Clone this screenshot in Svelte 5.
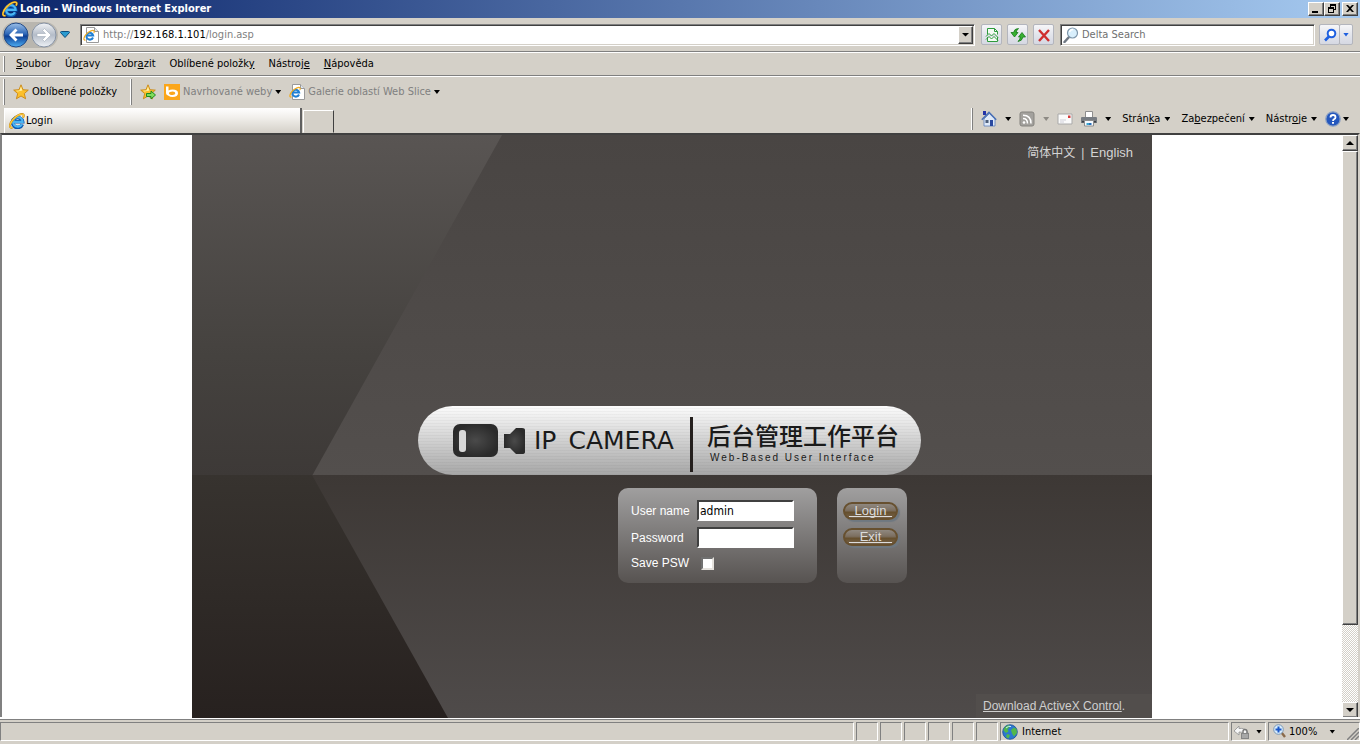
<script>
    // menu entries are split around the access key letter
    let menu = [
        ['', 'S', 'oubor'],
        ['Úp', 'r', 'avy'],
        ['Zobr', 'a', 'zit'],
        ['Oblíbené položk', 'y', ''],
        ['Nástroj', 'e', ''],
        ['', 'N', 'ápověda']
    ]

    let commands = [
        ['Strán', 'k', 'a'],
        ['Za', 'b', 'ezpečení'],
        ['Nástr', 'o', 'je']
    ]

    let address = 'http://192.168.1.101/login.asp'
    let user = 'admin'
    let password = ''
    let savePassword = false

    $: parts = address.match(/^(https?:\/\/)([^/]+)(.*)$/) || ['', '', '', address]
</script>

<svelte:head><title>Login</title></svelte:head>

{#snippet ie()}
    <svg class="icon" viewBox="0 0 16 16">
        <path d="M13.300 11.300A5 5 0 1 1 13.600 8.800H5" fill="none" stroke="#0c58b0" stroke-width="3.600" />
        <path d="M13 11.200A4.800 4.800 0 1 1 13.600 8.800H5" fill="none" stroke="#49b4f2" stroke-width="2.200" />
        <path d="M3.500 14.600C-.8 15.500.8 10 4.500 6 8.500 1.800 13 .2 14.300 1.500c.8.8.4 2-.3 3.200" fill="none" stroke="#b87a0c" stroke-width="2" />
        <path d="M3.500 14.600C-.8 15.500.8 10 4.500 6 8.500 1.800 13 .2 14.300 1.500c.8.8.4 2-.3 3.200" fill="none" stroke="#fbc83a" stroke-width="1.300" />
    </svg>
{/snippet}

{#snippet page()}
    <svg class="icon" viewBox="0 0 16 16">
        <path d="M3.500.5h8l4 4v11h-12z" fill="#fff" stroke="#9a9a9a" />
        <path d="M11.500.5v4h4" fill="#dfe6ee" stroke="#9a9a9a" />
        <path d="M10 10.500A3.400 3.400 0 1 1 10.200 8.600H4" fill="none" stroke="#1f7fd4" stroke-width="2" />
        <path d="M2.500 13C-.5 13.500 1 9.500 3.800 6.700 6.500 4 10 2.800 11 3.900c.5.500.2 1.300-.2 2" fill="none" stroke="#eeaa22" stroke-width="1.200" />
    </svg>
{/snippet}

{#snippet star(arrow)}
    <svg class="icon" viewBox="0 0 16 16">
        <path d="M8 .8l2 4.900 5.300.4-4 3.500 1.300 5.200L8 12l-4.600 2.800 1.300-5.200-4-3.500L6 5.700z" fill="#fcc02a" stroke="#c98714" stroke-width=".9" />
        <path d="M8 2.500L9.300 6.500 4.500 7.500 2.800 6.800 6.500 6.400z" fill="#fff1a8" />
        {#if arrow}
            <path d="M6.500 9.500h4.500V7l4.500 4-4.500 4v-2.500H6.500z" fill="#7fdc5a" stroke="#1f8a1f" />
        {/if}
    </svg>
{/snippet}

{#snippet label(t)}<span>{t[0]}<u>{t[1]}</u>{t[2]}</span>{/snippet}

<div class="window">
    <header class="titlebar">
        {@render ie()}
        <h1>Login - Windows Internet Explorer</h1>
        <div class="controls">
            <button class="raised" aria-label="Minimize"><svg viewBox="0 0 12 10"><path d="M2 7h6v2H2z" /></svg></button>
            <button class="raised" aria-label="Restore"><svg viewBox="0 0 12 10"><path d="M4 0h6v6H8V5h1V2H5v1H4zM2 3h6v6H2zM3 5v3h4V5z" fill-rule="evenodd" /></svg></button>
            <button class="raised close" aria-label="Close"><svg viewBox="0 0 12 10"><path d="M2 1h2l2 2 2-2h2L7 4.500 10 8H8L6 6 4 8H2l3-3.500z" /></svg></button>
        </div>
    </header>

    <div class="row navigation">
        <div class="travel">
            <button class="plain" aria-label="Back">
                <svg width="26" height="26" viewBox="0 0 26 26">
                    <defs>
                        <linearGradient id="back" x1="0" y1="0" x2="0" y2="1">
                            <stop offset="0" stop-color="#9cc0e8" />
                            <stop offset=".45" stop-color="#2f68b8" />
                            <stop offset=".55" stop-color="#0d3f96" />
                            <stop offset="1" stop-color="#4fb0f4" />
                        </linearGradient>
                    </defs>
                    <circle cx="13" cy="13" r="12" fill="url(#back)" stroke="#234a86" />
                    <path d="M12.500 6.500L6 13l6.500 6.500 2-2-3-3H20v-3h-8.500l3-3z" fill="#fff" />
                </svg>
            </button>
            <button class="plain" aria-label="Forward">
                <svg width="26" height="26" viewBox="0 0 26 26">
                    <defs>
                        <linearGradient id="forward" x1="0" y1="0" x2="0" y2="1">
                            <stop offset="0" stop-color="#f2f4f7" />
                            <stop offset=".5" stop-color="#b4bcc8" />
                            <stop offset="1" stop-color="#eef2f6" />
                        </linearGradient>
                    </defs>
                    <circle cx="13" cy="13" r="12" fill="url(#forward)" stroke="#8793a5" />
                    <path d="M13.500 6.500L20 13l-6.500 6.500-2-2 3-3H6v-3h8.500l-3-3z" fill="#fff" stroke="#a3acb9" stroke-width=".6" />
                </svg>
            </button>
        </div>
        <button class="plain recent" aria-label="Recent pages">
            <svg width="10" height="7" viewBox="0 0 10 7"><path d="M.5 1.500q0-1 1-1h7q1 0 1 1L5 6.500z" fill="#2a9bd0" stroke="#0d4f80" /></svg>
        </button>
        <div class="field address">
            {@render page()}
            <div class="url"><span>{parts[1]}</span>{parts[2]}<span>{parts[3]}</span></div>
            <button class="raised combo" aria-label="Show address history"><i class="arrow wide"></i></button>
        </div>
        <div class="tools">
            <button class="tool" aria-label="Compatibility view">
                <svg class="icon" viewBox="0 0 16 16">
                    <path d="M3.500 7.500v-6h7l3 3v3M3.500 10v4.500h10V10" fill="#f4fbf4" stroke="#2e9b3c" />
                    <path d="M10.500 1.500v3h3" fill="none" stroke="#2e9b3c" />
                    <path d="M2 9.500l3-3 2.500 2.500L10 6.500l4 4M2 12.500l3-3L7.500 12 10 9.500l4 4" fill="none" stroke="#2e9b3c" />
                </svg>
            </button>
            <button class="tool" aria-label="Refresh">
                <svg class="icon" viewBox="0 0 16 16">
                    <path d="M8.500 1.500Q4.500 1.500 3.500 5.500H1L4.500 10 8 5.500H6Q6.500 3.500 8.500 1.500z" fill="#38b032" stroke="#167a1c" stroke-width=".8" />
                    <path d="M8 14.500q4-.3 5-4.500h2.500L12 5.500 8.500 10h2Q10 12.500 8 14.500z" fill="#38b032" stroke="#167a1c" stroke-width=".8" />
                </svg>
            </button>
            <button class="tool" aria-label="Stop">
                <svg class="icon" viewBox="0 0 16 16"><path d="M3 3l10 11M13 3L3 14" stroke="#cf2f2f" stroke-width="2.400" /></svg>
            </button>
        </div>
        <div class="field search">
            <svg class="icon" viewBox="0 0 16 16">
                <path d="M6.500 9.500L1.500 15" stroke="#6f7883" stroke-width="2.500" stroke-linecap="round" />
                <circle cx="9.500" cy="6" r="5" fill="#d9effc" stroke="#7f97ab" stroke-width="1.200" />
                <path d="M6.500 5q1-2.500 3.500-2.500" stroke="#fff" stroke-width="1.500" fill="none" />
            </svg>
            <input type="text" placeholder="Delta Search" aria-label="Search" />
        </div>
        <div class="go">
            <button class="tool" aria-label="Search">
                <svg class="icon" viewBox="0 0 16 16">
                    <path d="M7 9.500L3 13.500" stroke="#1d5fe0" stroke-width="2.600" />
                    <circle cx="9.500" cy="6.500" r="3.800" fill="#fff" stroke="#1d5fe0" stroke-width="2" />
                </svg>
            </button>
            <button class="tool narrow" aria-label="Search options"><i class="arrow blue"></i></button>
        </div>
    </div>

    <nav class="row menu">
        <i class="grip"></i>
        {#each menu as item}
            <button class="plain">{@render label(item)}</button>
        {/each}
    </nav>

    <div class="row favorites">
        <i class="grip"></i>
        <button class="plain mine">{@render star(false)}Oblíbené položky</button>
        <i class="grip"></i>
        <button class="plain add" aria-label="Add to favorites">{@render star(true)}</button>
        <button class="plain faded">
            <svg class="icon" viewBox="0 0 16 16">
                <path d="M0 0h16v16H0z" fill="#fba61a" />
                <path d="M2 2.500h2.500v4Q6 5.500 8.500 5.500q5.500 0 5.500 3.700T8.500 13q-2.500 0-4-1.200-2.500-1-2.500-2.600zM8.500 7.500Q5 7.500 5 9.200T8.500 11q2.800 0 2.800-1.800T8.500 7.500z" fill="#fff" fill-rule="evenodd" />
            </svg>
            <span>Navrhované weby</span><i class="arrow"></i>
        </button>
        <button class="plain faded">{@render page()}<span>Galerie oblastí Web Slice</span><i class="arrow"></i></button>
    </div>

    <div class="tabs">
        <button class="tab">{@render ie()}Login</button>
        <button class="new-tab" aria-label="New tab"></button>
        <div class="commands">
            <i class="grip"></i>
            <button class="plain" aria-label="Home">
                <svg class="icon" viewBox="0 0 16 16">
                    <path d="M2 0h3v4H2z" fill="#2232a8" />
                    <path d="M3 8l5.500-5.500L14 8v7H3z" fill="#dfe9f8" stroke="#5a7dbb" stroke-width=".8" />
                    <path d="M.8 8.700L8 1.500l7.200 7.200" fill="none" stroke="#4a70b5" stroke-width="1.600" />
                    <path d="M4.500 9h3v3h-3z" fill="#4d5f7b" />
                    <path d="M9 9h3v6H9z" fill="#2a49a0" />
                </svg>
                <i class="arrow"></i>
            </button>
            <button class="plain" aria-label="Feeds">
                <svg class="icon" viewBox="0 0 16 16">
                    <rect x="1" y="1" width="14" height="14" rx="2" fill="#a3a19d" stroke="#85837f" />
                    <circle cx="5" cy="11.500" r="1.300" fill="#fff" />
                    <path d="M4 7.500q4.500 0 4.500 5M4 4.200q8 0 8 8.300" fill="none" stroke="#fff" stroke-width="1.500" />
                </svg>
                <i class="arrow dim"></i>
            </button>
            <button class="plain" aria-label="Read mail">
                <svg class="icon" viewBox="0 0 16 16">
                    <path d="M1 3h14v10H1z" fill="#fbfbfb" stroke="#a9a9a9" />
                    <path d="M11 4.500h2.500V7H11z" fill="#d43a3a" />
                    <path d="M3 9h6M3 11h4" stroke="#cfcfd8" />
                </svg>
            </button>
            <button class="plain" aria-label="Print">
                <svg class="icon" viewBox="0 0 16 16">
                    <path d="M4.500.5h7v6h-7z" fill="#fff" stroke="#8d8d8d" />
                    <path d="M1 6h14q1 0 1 1v5H0V7q0-1 1-1z" fill="#777c82" />
                    <path d="M1 10h14v1.500H1z" fill="#3c4046" />
                    <path d="M3.500 9.500h9v5.500h-9z" fill="#f5faff" stroke="#8d8d8d" />
                    <path d="M5.500 12h2.500v2H5.500z" fill="#3aa6d0" />
                    <path d="M8 12h2.500v2H8z" fill="#2a6fb8" />
                </svg>
                <i class="arrow"></i>
            </button>
            {#each commands as item}
                <button class="plain text">{@render label(item)}<i class="arrow"></i></button>
            {/each}
            <button class="plain help" aria-label="Help">
                <svg class="icon" viewBox="0 0 16 16">
                    <circle cx="8" cy="8" r="7.200" fill="#2457bd" stroke="#8aa0c4" stroke-width="1.300" />
                    <path d="M5.500 6.500Q5.500 4 8 4t2.500 2.200Q10.500 7.500 9 8.300 8 8.900 8 10" fill="none" stroke="#fff" stroke-width="1.800" />
                    <path d="M7 11h2v1.800H7z" fill="#fff" />
                </svg>
                <i class="arrow"></i>
            </button>
        </div>
    </div>

    <div class="viewport">
        <main>
            <svg class="backdrop" viewBox="0 0 960 583" preserveAspectRatio="none">
                <defs>
                    <linearGradient id="topleft" x1="0" y1="0" x2="0" y2="1">
                        <stop offset="0" stop-color="#595553" />
                        <stop offset=".65" stop-color="#45423f" />
                        <stop offset="1" stop-color="#3d3937" />
                    </linearGradient>
                    <linearGradient id="topright" x1="0" y1="0" x2="0" y2="1">
                        <stop offset="0" stop-color="#494543" />
                        <stop offset="1" stop-color="#534f4d" />
                    </linearGradient>
                    <linearGradient id="bottomleft" x1="0" y1="0" x2="0" y2="1">
                        <stop offset="0" stop-color="#37332f" />
                        <stop offset="1" stop-color="#27211f" />
                    </linearGradient>
                    <linearGradient id="bottomright" x1="0" y1="0" x2="0" y2="1">
                        <stop offset="0" stop-color="#3d3835" />
                        <stop offset="1" stop-color="#4f4b4a" />
                    </linearGradient>
                </defs>
                <path d="M0 0h960v341H0z" fill="url(#topleft)" />
                <path d="M310 0h650v341H120z" fill="url(#topright)" />
                <path d="M0 340h960v243H0z" fill="url(#bottomleft)" />
                <path d="M120 340h840v243H256z" fill="url(#bottomright)" />
            </svg>

            <div class="languages">
                <a href="#zh">简体中文</a><span>|</span><a href="#en">English</a>
            </div>

            <div class="center">
                <div class="banner">
                    <svg width="74" height="36" viewBox="0 0 74 36">
                        <defs>
                            <radialGradient id="body">
                                <stop offset="0" stop-color="#4a4a4a" />
                                <stop offset="1" stop-color="#2b2b2b" />
                            </radialGradient>
                        </defs>
                        <rect x="1" y="1" width="45" height="33" rx="7" fill="url(#body)" />
                        <rect x="7" y="7" width="7" height="22" rx="3" fill="#d8d8d8" />
                        <path d="M52 11h6l6-6h6q3 0 3 2v22q0 2-3 2h-6l-6-6h-6z" fill="url(#body)" />
                    </svg>
                    <div class="brand"><span>IP</span><span>CAMERA</span></div>
                    <div class="platform">
                        <strong>后台管理工作平台</strong>
                        <small>Web-Based User Interface</small>
                    </div>
                </div>

                <form on:submit|preventDefault>
                    <div class="panel fields">
                        <label for="user">User name</label>
                        <input id="user" type="text" bind:value={user} />
                        <label for="password">Password</label>
                        <input id="password" type="password" bind:value={password} />
                        <label for="save">Save PSW</label>
                        <input id="save" type="checkbox" bind:checked={savePassword} />
                    </div>
                    <div class="panel actions">
                        <button type="submit"><span>Login</span></button>
                        <button type="button"><span>Exit</span></button>
                    </div>
                </form>
            </div>

            <div class="download"><a href="#activex">Download ActiveX Control</a>.</div>
        </main>

        <div class="scrollbar">
            <button class="raised" aria-label="Scroll up"><i class="arrow wide up"></i></button>
            <div class="track"><div class="raised thumb"></div></div>
            <button class="raised" aria-label="Scroll down"><i class="arrow wide"></i></button>
        </div>
    </div>

    <footer>
        <div class="pane message"></div>
        {#each Array(6) as _}
            <div class="pane small"></div>
        {/each}
        <div class="pane zone">
            <svg class="icon" viewBox="0 0 16 16">
                <circle cx="8" cy="8" r="7.300" fill="#2c78cf" stroke="#1b4e95" stroke-width=".8" />
                <path d="M3 3q3-2.500 5-1.500L7 4 5.500 5l1 2.500L4 9 1.500 6.500zM9 6l3-2.500 2.500 1.500.5 4-3 3.500-2-3zM5 10l3 1-1.500 3.500L4 13z" fill="#52b84a" />
                <path d="M4 4q2.500-2.500 5-1.500" stroke="#c8ecff" fill="none" />
            </svg>
            Internet
        </div>
        <div class="pane protect">
            <svg class="icon" viewBox="0 0 16 16">
                <path d="M0 7l5-5v2.500q6-1 9 4L10 10Q8 7.500 5 8v3z" fill="#f6f6f6" stroke="#989898" stroke-width=".9" />
                <path d="M9 9V7.500q0-2 2-2t2 2V9" fill="none" stroke="#777" stroke-width="1.400" />
                <path d="M7 9h8v6H7z" fill="#858585" />
                <path d="M8 11h6M8 13h6" stroke="#c9c9c9" />
            </svg>
            <i class="arrow"></i>
        </div>
        <div class="pane zoom">
            <svg class="icon" viewBox="0 0 16 16">
                <path d="M8.500 8.500L12 13" stroke="#8a6a4a" stroke-width="2.400" />
                <circle cx="5.500" cy="5.500" r="4.800" fill="#d6ecfc" stroke="#7d98b5" />
                <path d="M4.500 2.500h2v2h2v2h-2v2h-2v-2h-2v-2h2z" fill="#1c58c8" />
            </svg>
            <span>100%</span>
            <i class="arrow"></i>
            <svg class="resize" viewBox="0 0 12 12"><path d="M0 12L12 0M4 12l8-8M8 12l4-4" stroke="#808080" stroke-width="1.500" /></svg>
        </div>
    </footer>
</div>

<style>
    :global(body) {
        margin: 0;
        background: #d4d0c8;
    }
    .window {
        display: flex;
        flex-direction: column;
        min-height: 100vh;
        background: #d4d0c8;
        color: #000;
        font-family: 'DejaVu Sans Condensed', 'DejaVu Sans', Tahoma, sans-serif;
        font-size: 11px;
        line-height: 14px;
    }
    button, input {
        font: inherit;
        color: inherit;
        margin: 0;
        padding: 0;
        border-radius: 0;
        box-sizing: border-box;
    }
    .icon {
        width: 16px;
        height: 16px;
        flex: none;
        display: block;
    }
    .plain {
        display: flex;
        align-items: center;
        border: none;
        background: none;
        white-space: nowrap;
    }
    .raised {
        display: flex;
        align-items: center;
        justify-content: center;
        background: #d4d0c8;
        border: 1px solid;
        border-color: #fff #404040 #404040 #fff;
        box-shadow: inset -1px -1px #808080;
        box-sizing: border-box;
    }
    .arrow {
        flex: none;
        width: 6px;
        height: 4px;
        background: #000;
        clip-path: polygon(0 0, 100% 0, 50% 100%);
    }
    .arrow.wide {
        width: 8px;
        height: 4px;
    }
    .arrow.up {
        transform: rotate(180deg);
    }
    .arrow.blue {
        background: #1d5fe0;
    }
    .arrow.dim {
        background: #8d8a84;
    }
    .grip {
        flex: none;
        align-self: stretch;
        width: 1px;
        margin: 3px 0;
        border-left: 1px solid #fff;
        background: #808080;
    }

    /* title bar */
    .titlebar {
        display: flex;
        align-items: center;
        height: 18px;
        padding: 0 2px;
        background: linear-gradient(to right, #0a246a, #a6caf0);
    }
    h1 {
        flex: 1;
        margin: 0 0 0 2px;
        font-size: 11px;
        line-height: 14px;
        color: #fff;
    }
    .controls {
        display: flex;
    }
    .controls button {
        width: 16px;
        height: 14px;
    }
    .controls svg {
        width: 12px;
        height: 10px;
    }
    .controls .close {
        margin-left: 2px;
    }

    /* tool bars */
    .row {
        display: flex;
        align-items: center;
        border-bottom: 1px solid #808080;
        box-shadow: 0 1px #fff;
    }
    .navigation {
        height: 33px;
        padding: 0 7px 0 2px;
    }
    .travel {
        display: flex;
        gap: 2px;
        padding: 0 1px;
        border-radius: 14px;
        background: #b9b6af;
    }
    .recent {
        margin: 0 10px 0 2px;
    }
    .field {
        display: flex;
        align-items: center;
        height: 22px;
        box-sizing: border-box;
        background: #fff;
        border: 1px solid;
        border-color: #808080 #fff #fff #808080;
        box-shadow: inset 1px 1px #404040, inset -1px -1px #d4d0c8;
    }
    .address {
        flex: 1;
        gap: 4px;
        padding: 0 1px 0 2px;
    }
    .url {
        flex: 1;
        padding-top: 1px;
    }
    .url span {
        color: #808080;
    }
    .combo {
        width: 15px;
        height: 18px;
    }
    .tools {
        display: flex;
        gap: 5px;
        margin: 0 6px;
    }
    .tool {
        display: flex;
        align-items: center;
        justify-content: center;
        width: 21px;
        height: 21px;
        border: 1px solid #b3b5bd;
        border-radius: 2px;
        background: linear-gradient(#f6f6f8, #e3e5ec 50%, #d5d8e2);
    }
    .tool.narrow {
        width: 14px;
        margin-left: -1px;
    }
    .search {
        width: 255px;
        gap: 3px;
        padding: 1px 3px 0 2px;
    }
    .search input {
        flex: 1;
        min-width: 0;
        border: none;
        outline: none;
        background: none;
    }
    .search input::placeholder {
        color: #707070;
        opacity: 1;
    }
    .go {
        display: flex;
        margin-left: 4px;
    }
    .menu {
        height: 22px;
        margin-top: 1px;
        padding-left: 3px;
    }
    .menu .plain {
        padding: 0 7px;
    }
    .menu .grip {
        margin-right: 4px;
    }
    .favorites {
        height: 32px;
        padding-left: 3px;
        border: none;
        box-shadow: none;
    }
    .mine {
        gap: 3px;
        padding: 0 13px 0 8px;
    }
    .add {
        padding: 0 8px;
    }
    .faded {
        gap: 3px;
        color: #808080;
        margin-right: 8px;
    }
    .tabs {
        display: flex;
        height: 25px;
    }
    .tab {
        display: flex;
        align-items: center;
        gap: 1px;
        width: 298px;
        margin-left: 4px;
        padding-left: 4px;
        border: none;
        border-left: 1px solid #fff;
        border-right: 2px solid #606060;
        background: linear-gradient(#fff, #f0eeea 40%, #d4d0c8);
    }
    .new-tab {
        width: 31px;
        margin: 2px 0 0 1px;
        border: 1px solid;
        border-color: #fff #404040 #d4d0c8 #fff;
        background: #d4d0c8;
    }
    .commands {
        display: flex;
        align-items: center;
        margin-left: auto;
        padding-right: 11px;
        padding-bottom: 3px;
    }
    .commands .grip {
        margin: 0;
    }
    .commands .plain {
        gap: 8px;
        margin-left: 8px;
    }
    .commands .text {
        gap: 4px;
        margin-left: 11px;
    }
    .commands .help {
        gap: 2px;
    }

    /* page area */
    .viewport {
        display: flex;
        flex: 1;
        border: solid #404040;
        border-width: 2px 0 0 2px;
        border-left-color: #808080;
        border-right: 2px solid #d4d0c8;
        background: #fff;
    }
    main {
        position: relative;
        display: flex;
        flex-direction: column;
        width: 960px;
        margin: 0 auto;
        overflow: hidden;
        font-family: 'Liberation Sans', Arial, 'Noto Sans CJK SC', sans-serif;
        font-size: 12px;
        color: #fff;
    }
    .backdrop {
        position: absolute;
        inset: 0;
        width: 100%;
        height: 100%;
    }
    .languages, .center, .download {
        position: relative;
    }
    .languages {
        display: flex;
        justify-content: flex-end;
        gap: 6px;
        padding: 11px 19px 0 0;
        line-height: 14px;
        color: #d4d4d4;
    }
    .languages a {
        color: inherit;
        text-decoration: none;
    }
    .languages a:last-child {
        font-size: 13px;
    }
    .center {
        width: 503px;
        margin: 246px 0 0 226px;
    }
    .banner {
        display: flex;
        align-items: center;
        height: 69px;
        padding: 0 22px 0 34px;
        box-sizing: border-box;
        border-radius: 35px;
        background: repeating-linear-gradient(transparent 0 2px, rgba(0, 0, 0, 0.03) 2px 3px), linear-gradient(#fcfcfc, #a6a6a6);
        color: #1a1a1a;
    }
    .brand {
        display: flex;
        flex: 1;
        gap: 12px;
        margin-left: 8px;
        font-family: 'DejaVu Sans', sans-serif;
        font-size: 25px;
        line-height: 28px;
        white-space: nowrap;
    }
    .platform {
        display: flex;
        flex-direction: column;
        height: 55px;
        gap: 1px;
        padding: 2px 0 0 14px;
        margin-top: 8px;
        box-sizing: border-box;
        border-left: 3px solid #241f1d;
    }
    .platform strong {
        font-family: 'Noto Sans CJK SC', sans-serif;
        font-size: 24px;
        font-weight: 500;
        line-height: 32px;
    }
    .platform small {
        margin-left: 3px;
        font-size: 10px;
        line-height: 12px;
        letter-spacing: 2px;
    }
    form {
        display: flex;
        justify-content: flex-end;
        gap: 20px;
        margin: 13px 14px 0 0;
    }
    .panel {
        height: 95px;
        box-sizing: border-box;
        border-radius: 10px;
        background: linear-gradient(#a09f9f, #575351);
    }
    .fields {
        display: grid;
        grid-template-columns: 66px 97px;
        grid-template-rows: 21px 21px 18px;
        row-gap: 6px;
        align-items: center;
        width: 199px;
        padding: 12px 13px;
    }
    .fields input {
        border: 2px solid;
        border-color: #404040 #fff #fff #404040;
        background: #fff;
        color: #000;
        outline: none;
    }
    .fields input:not([type='checkbox']) {
        width: 97px;
        height: 21px;
        padding: 1px 1px 0;
        font-family: 'DejaVu Sans Condensed', 'DejaVu Sans', sans-serif;
        font-size: 12px;
    }
    .fields input[type='checkbox'] {
        appearance: none;
        width: 13px;
        height: 13px;
        margin-left: 4px;
        border-color: #707070 #e4e1dc #e4e1dc #707070;
    }
    .fields input[type='checkbox']:checked {
        background: #404040;
    }
    .actions {
        display: flex;
        flex-direction: column;
        gap: 8px;
        width: 70px;
        padding: 14px 6px;
    }
    .actions button {
        display: flex;
        justify-content: center;
        width: 55px;
        height: 18px;
        border: 2px solid #67502f;
        border-radius: 9px;
        background: linear-gradient(#8f8880, #7c6f60 45%, #66502f 60%, #77634a);
        box-shadow: 2px 2px 1px #6f7880;
        color: #dcdcdc;
        font-size: 13px;
        line-height: 13px;
    }
    .actions span {
        width: 43px;
        height: 12px;
        border-bottom: 1px solid #dcdcdc;
    }
    .download {
        margin: auto 0 0 auto;
        width: 169px;
        padding: 5px 0 5px 7px;
        background: #524e4c;
        color: #cfcfcf;
    }
    .download a {
        color: inherit;
    }
    .scrollbar {
        display: flex;
        flex-direction: column;
        width: 16px;
    }
    .scrollbar button {
        width: 16px;
        height: 16px;
    }
    .track {
        flex: 1;
        background: repeating-conic-gradient(#fff 0 25%, #d4d0c8 0 50%) 0 0 / 2px 2px;
    }
    .thumb {
        height: 86%;
    }

    /* status bar */
    footer {
        display: flex;
        gap: 2px;
        height: 19px;
        padding: 2px 0 3px;
        border-top: 1px solid #808080;
        margin-top: 1px;
        box-shadow: 0 -2px #fff;
    }
    .pane {
        display: flex;
        align-items: center;
        box-sizing: border-box;
        border: 1px solid;
        border-color: #808080 #fff #fff #808080;
    }
    .message {
        flex: 1;
    }
    .small {
        width: 22px;
    }
    .zone {
        width: 229px;
        gap: 4px;
        padding-left: 1px;
    }
    .protect {
        width: 35px;
        gap: 6px;
        padding-left: 2px;
    }
    .zoom {
        width: 92px;
        padding-left: 4px;
    }
    .zoom .arrow {
        margin-left: 12px;
    }
    .resize {
        width: 12px;
        height: 12px;
        margin-left: auto;
        align-self: flex-end;
    }
</style>
